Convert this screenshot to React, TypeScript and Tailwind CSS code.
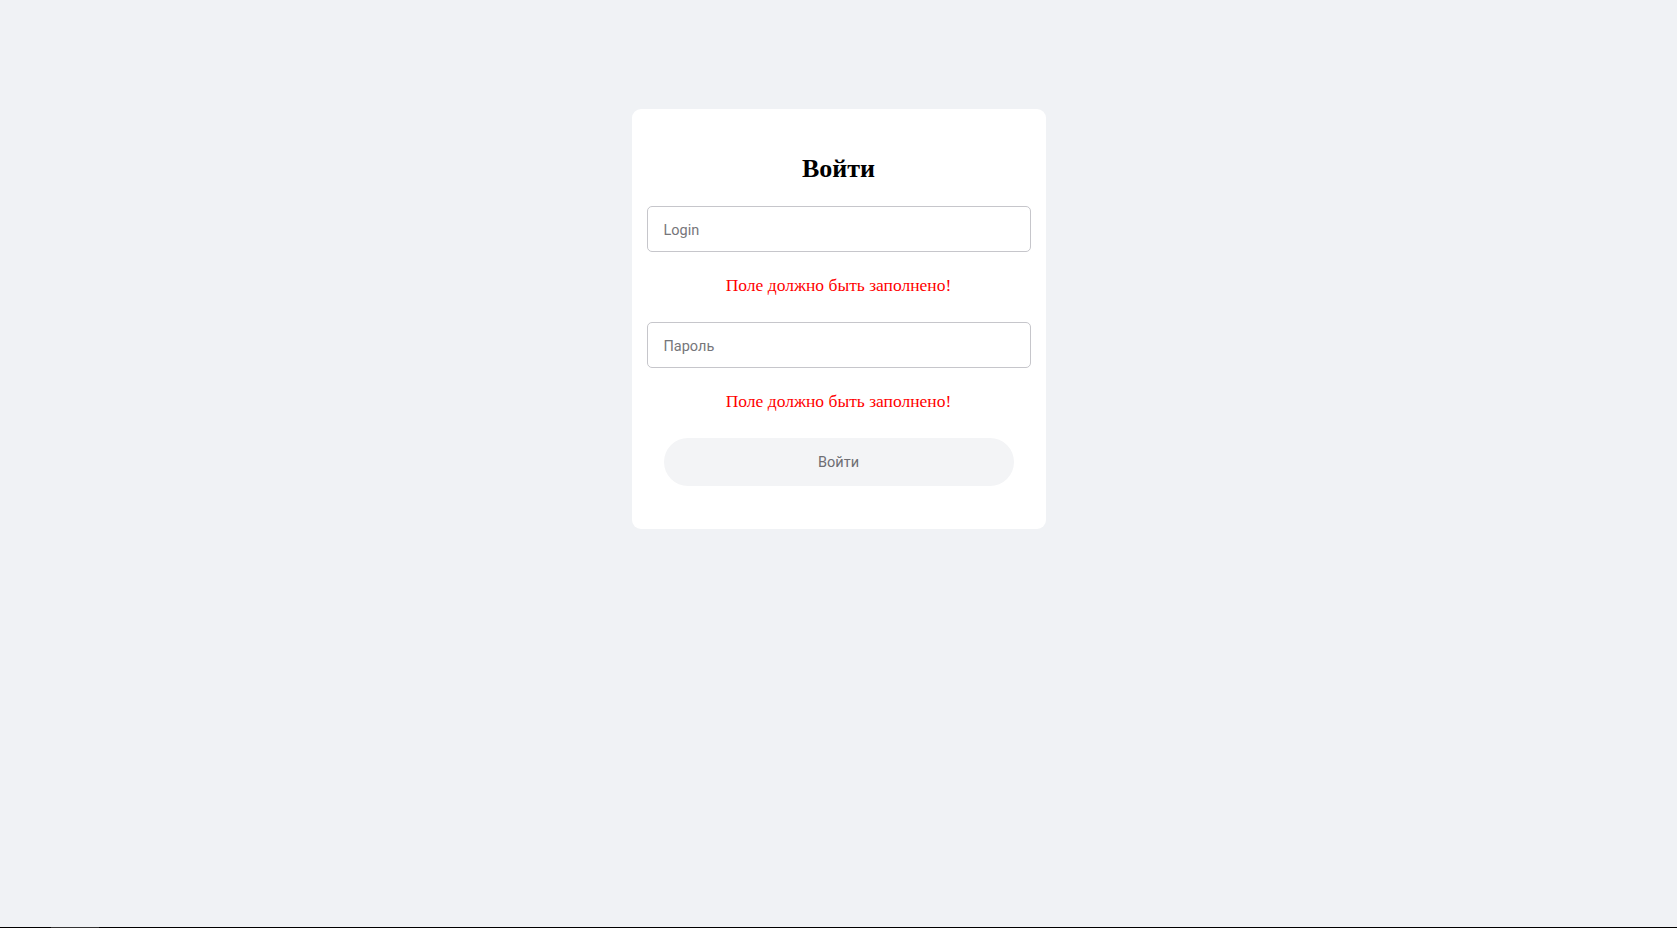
import { useState } from 'react'

function FieldError() {
  return (
    <div className="mt-5 h-6 pt-px text-center font-['Liberation_Serif',serif] text-[17.5px] leading-6 text-[#ff0000]">
      Поле должно быть заполнено!
    </div>
  )
}

export default function App() {
  const [login, setLogin] = useState('')
  const [password, setPassword] = useState('')

  return (
    <div className="flex h-[928px] flex-col bg-[#f0f2f5] font-['Roboto',sans-serif]">
      <div className="flex flex-1 justify-center pt-[109px]">
        <form
          onSubmit={e => e.preventDefault()}
          className="flex h-fit w-[414px] flex-col rounded-[9px] bg-white px-[15px] pt-10 pb-[43px]"
        >
          <h2 className="h-10 text-center font-['Liberation_Serif',serif] text-[26px] leading-10 font-bold text-black">
            Войти
          </h2>

          <input
            value={login}
            onChange={e => setLogin(e.target.value)}
            placeholder="Login"
            className="mt-[17px] h-[46px] w-full rounded-[5px] border border-[#c6c6cb] px-4 pt-0.5 text-[14.5px] text-[#333] outline-none placeholder:text-[#76767a]"
          />
          <FieldError />

          <input
            type="password"
            value={password}
            onChange={e => setPassword(e.target.value)}
            placeholder="Пароль"
            className="mt-[26px] h-[46px] w-full rounded-[5px] border border-[#c6c6cb] px-4 pt-0.5 text-[14.5px] text-[#333] outline-none placeholder:text-[#76767a]"
          />
          <FieldError />

          <button
            type="submit"
            disabled
            className="mx-[17px] mt-[26px] h-12 rounded-full bg-[#f3f4f6] pt-0.5 text-[14.5px] text-[#6e6e73]"
          >
            Войти
          </button>
        </form>
      </div>
      <div className="flex h-px bg-black">
        <div className="ml-[51px] w-12 bg-[#333]" />
      </div>
    </div>
  )
}
